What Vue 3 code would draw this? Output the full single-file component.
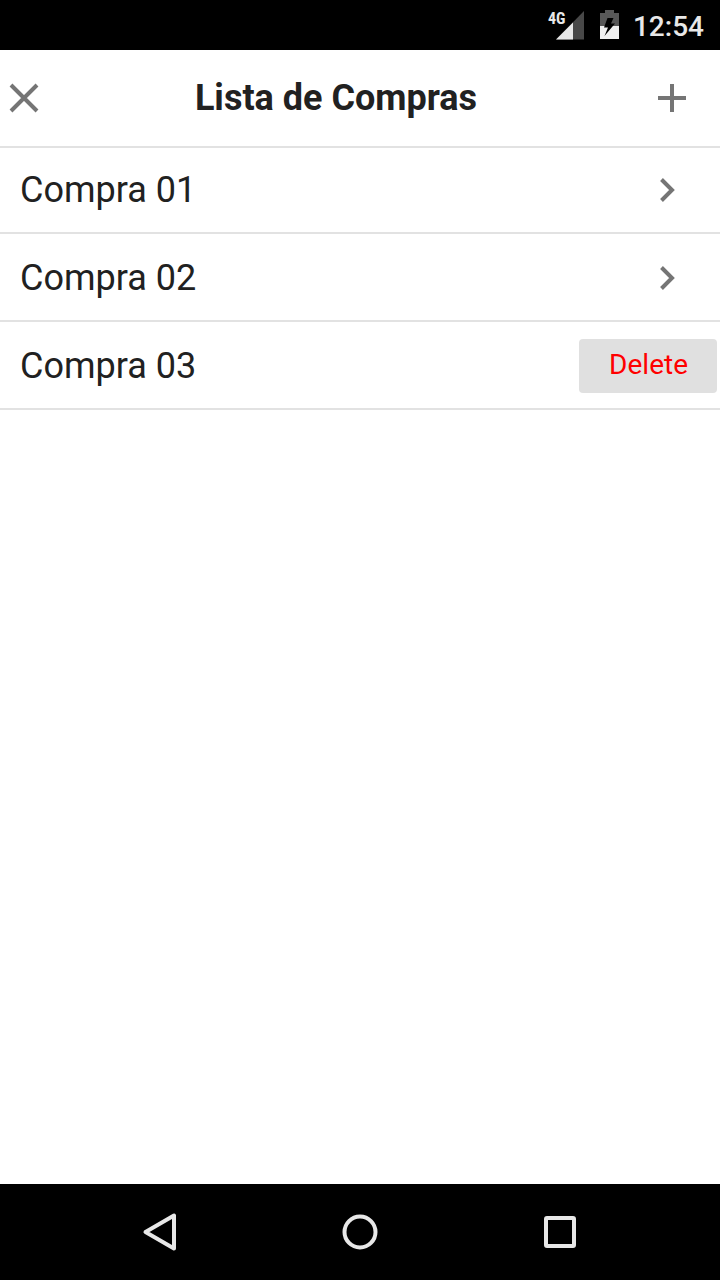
<script setup>
import { ref } from 'vue'

const items = ref([
  { id: 1, name: 'Compra 01', swiped: false },
  { id: 2, name: 'Compra 02', swiped: false },
  { id: 3, name: 'Compra 03', swiped: true }
])

function remove(id) {
  items.value = items.value.filter((item) => item.id !== id)
}
</script>

<template>
  <div class="screen">
    <div class="status">
      <div class="signal">
        <span class="network">4G</span>
        <svg class="bars" width="28" height="28" viewBox="0 0 28 28" aria-hidden="true">
          <path d="M28 0V28.500H0Z" fill="#484848" />
          <path d="M17 11.500V28.500H0Z" fill="#e8e8e8" />
        </svg>
      </div>
      <svg class="battery" width="19" height="30" viewBox="0 0 19 30" aria-hidden="true">
        <path d="M5 0H14V3H19V16H0V3H5Z" fill="#585858" />
        <path d="M0 16H19V29H0Z" fill="#f0f0f0" />
        <path d="M7.500 8H13.500L11 13.500H15L4.500 26L8 17.500H4Z" fill="#000" />
      </svg>
      <span class="clock">12:54</span>
    </div>

    <header class="toolbar">
      <button class="icon-button" type="button" aria-label="Fechar">
        <svg width="48" height="48" viewBox="0 0 48 48" aria-hidden="true">
          <path d="M11 11L37 37M37 11L11 37" stroke="#757575" stroke-width="4" fill="none" />
        </svg>
      </button>
      <h1 class="title">Lista de Compras</h1>
      <button class="icon-button" type="button" aria-label="Adicionar">
        <svg width="48" height="48" viewBox="0 0 48 48" aria-hidden="true">
          <path d="M24 10V38M10 24H38" stroke="#757575" stroke-width="4" fill="none" />
        </svg>
      </button>
    </header>

    <main class="content">
      <ul class="list">
        <li v-for="item in items" :key="item.id" class="row">
          <span class="name">{{ item.name }}</span>
          <button v-if="item.swiped" class="delete" type="button" @click="remove(item.id)">Delete</button>
          <button v-else class="open" type="button" :aria-label="'Abrir ' + item.name">
            <svg width="16" height="24" viewBox="0 0 16 24" aria-hidden="true">
              <path d="M1.500 1.500L12 12L1.500 22.500" stroke="#757575" stroke-width="4" fill="none" />
            </svg>
          </button>
        </li>
      </ul>
    </main>

    <nav class="navbar">
      <button class="nav-button" type="button" aria-label="Voltar">
        <svg width="40" height="40" viewBox="0 0 40 40" aria-hidden="true">
          <path d="M34 3.500V36.500L5.500 20Z" />
        </svg>
      </button>
      <button class="nav-button" type="button" aria-label="Início">
        <svg width="40" height="40" viewBox="0 0 40 40" aria-hidden="true">
          <circle cx="20" cy="20" r="15.500" />
        </svg>
      </button>
      <button class="nav-button" type="button" aria-label="Recentes">
        <svg width="40" height="40" viewBox="0 0 40 40" aria-hidden="true">
          <rect x="6" y="6" width="28" height="28" rx="1" />
        </svg>
      </button>
    </nav>
  </div>
</template>

<style>
body {
  margin: 0;
}
</style>

<style scoped>
.screen {
  display: flex;
  flex-direction: column;
  min-height: 100vh;
  background: #fff;
  color: #212121;
  font-family: Roboto, "Noto Sans", sans-serif;
}

button {
  padding: 0;
  border: 0;
  background: none;
  font-family: inherit;
  cursor: pointer;
}

svg {
  display: block;
}

.status {
  display: flex;
  align-items: center;
  justify-content: flex-end;
  height: 50px;
  padding-right: 16px;
  background: #000;
  color: #e8e8e8;
}

.signal {
  position: relative;
  margin-right: 16px;
  padding-left: 8px;
}

.bars {
  overflow: visible;
}

.battery {
  margin-right: 14px;
}

.network {
  position: absolute;
  top: 0;
  left: 0;
  font-family: "Roboto Condensed", Roboto, sans-serif;
  font-size: 16px;
  line-height: 16px;
  font-weight: 700;
}

.clock {
  padding-top: 4px;
  font-size: 28px;
  line-height: 32px;
  font-weight: 500;
}

.toolbar {
  position: relative;
  display: flex;
  align-items: center;
  height: 96px;
  padding-right: 24px;
  background: #fff;
  box-shadow: 0 2px 0 #e2e2e2;
}

.title {
  flex: 1;
  margin: 0;
  padding-right: 24px;
  font-size: 36px;
  line-height: 44px;
  font-weight: 700;
  text-align: center;
}

.content {
  flex: 1;
}

.list {
  margin: 0;
  padding: 0;
  list-style: none;
}

.row {
  display: flex;
  align-items: center;
  justify-content: space-between;
  box-sizing: border-box;
  height: 88px;
  padding: 2px 3px 0 20px;
  border-bottom: 2px solid #e2e2e2;
}

.name {
  font-size: 36px;
  line-height: 44px;
}

.open {
  padding: 0 41px 0 20px;
}

.delete {
  height: 54px;
  padding: 0 29px 2px 30px;
  border-radius: 4px;
  background: #e0e0e0;
  color: #f00;
  font-size: 28px;
  line-height: 32px;
}

.navbar {
  display: flex;
  align-items: center;
  height: 96px;
  padding: 0 60px;
  background: #000;
}

.nav-button {
  display: flex;
  flex: 1;
  justify-content: center;
  padding: 28px 0;
}

.nav-button svg {
  fill: none;
  stroke: #e8e8e8;
  stroke-width: 4;
  stroke-linejoin: round;
}
</style>
